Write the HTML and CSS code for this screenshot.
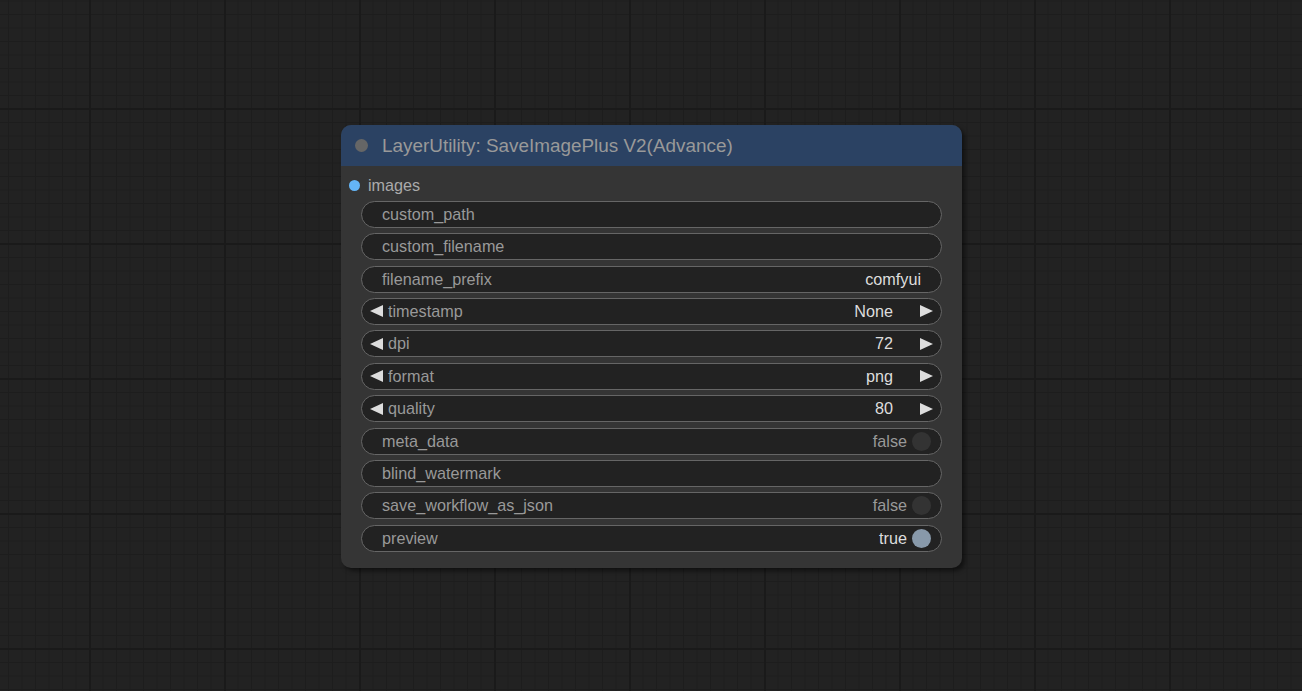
FILE: index.html
```html
<!DOCTYPE html>
<html lang="en">
<head>
    <meta charset="UTF-8">
    <meta name="viewport" content="width=device-width, initial-scale=1.0">
    <title>LayerUtility: SaveImagePlus V2(Advance)</title>
    <link rel="stylesheet" href="styles.css">
</head>
<body>
    <div class="canvas">
        <div class="node">
            <div class="node-title">
                <span class="title-dot"></span>
                <span class="title-text">LayerUtility: SaveImagePlus V2(Advance)</span>
            </div>

            <div class="node-inputs">
                <div class="slot">
                    <span class="slot-dot"></span>
                    <span class="slot-name">images</span>
                </div>
            </div>

            <div class="widgets">
                <div class="widget">
                    <span class="w-label">custom_path</span>
                </div>
                <div class="widget">
                    <span class="w-label">custom_filename</span>
                </div>
                <div class="widget">
                    <span class="w-label">filename_prefix</span>
                    <span class="w-value">comfyui</span>
                </div>
                <div class="widget combo">
                    <span class="arrow arrow-left"></span>
                    <span class="w-label">timestamp</span>
                    <span class="w-value">None</span>
                    <span class="arrow arrow-right"></span>
                </div>
                <div class="widget combo">
                    <span class="arrow arrow-left"></span>
                    <span class="w-label">dpi</span>
                    <span class="w-value">72</span>
                    <span class="arrow arrow-right"></span>
                </div>
                <div class="widget combo">
                    <span class="arrow arrow-left"></span>
                    <span class="w-label">format</span>
                    <span class="w-value">png</span>
                    <span class="arrow arrow-right"></span>
                </div>
                <div class="widget combo">
                    <span class="arrow arrow-left"></span>
                    <span class="w-label">quality</span>
                    <span class="w-value">80</span>
                    <span class="arrow arrow-right"></span>
                </div>
                <div class="widget toggle">
                    <span class="w-label">meta_data</span>
                    <span class="w-value off">false</span>
                    <span class="knob"></span>
                </div>
                <div class="widget">
                    <span class="w-label">blind_watermark</span>
                </div>
                <div class="widget toggle">
                    <span class="w-label">save_workflow_as_json</span>
                    <span class="w-value off">false</span>
                    <span class="knob"></span>
                </div>
                <div class="widget toggle">
                    <span class="w-label">preview</span>
                    <span class="w-value">true</span>
                    <span class="knob on"></span>
                </div>
            </div>
        </div>
    </div>
</body>
</html>
```

FILE: styles.css
```css
/* ComfyUI node canvas */
body {
    margin: 0;
    font-family: 'Liberation Sans', Arial, sans-serif;
    background-color: #222;
    overflow: hidden;
}

.canvas {
    position: relative;
    width: 100vw;
    height: 100vh;
    background-color: #222;
    background-image:
        linear-gradient(to right, #1a1a1a 0, #1a1a1a 1.5px, transparent 1.5px),
        linear-gradient(to bottom, #1a1a1a 0, #1a1a1a 1.5px, transparent 1.5px),
        linear-gradient(to right, #1d1d1d 0, #1d1d1d 1px, transparent 1px),
        linear-gradient(to bottom, #1d1d1d 0, #1d1d1d 1px, transparent 1px);
    background-size: 135px 135px, 135px 135px, 13.5px 13.5px, 13.5px 13.5px;
    background-position: 89px 0, 0 108px, 8px 0, 0 0.5px;
}

/* node sits on the canvas at its own coordinates */
.node {
    position: absolute;
    left: 341px;
    top: 125px;
    width: 621px;
    height: 443px;
    background-color: #353535;
    border-radius: 10px;
    box-shadow: 3px 3px 4px rgba(0, 0, 0, 0.5);
    display: flex;
    flex-direction: column;
}

.node-title {
    height: 40.5px;
    box-sizing: border-box;
    padding-top: 1px;
    flex-shrink: 0;
    display: flex;
    align-items: center;
    gap: 14px;
    padding-left: 14px;
    background-color: #2b4263;
    border-radius: 10px 10px 0 0;
}

.title-dot {
    width: 13px;
    height: 13px;
    border-radius: 50%;
    background-color: #666;
}

.title-text {
    font-size: 18.9px;
    color: #999;
    white-space: nowrap;
}

.node-inputs {
    padding: 10px 0 6px 8px;
}

.slot {
    height: 19px;
    display: flex;
    align-items: center;
    gap: 8px;
}

.slot-dot {
    width: 11px;
    height: 11px;
    border-radius: 50%;
    background-color: #64b5f6;
}

.slot-name {
    font-size: 16.2px;
    color: #aaa;
}

.widgets {
    display: flex;
    flex-direction: column;
    gap: 5.4px;
    padding: 0.3px 20px 0;
}

.widget {
    height: 27px;
    box-sizing: border-box;
    display: flex;
    align-items: center;
    padding: 0 20px;
    background-color: #222;
    border: 1px solid #666;
    border-radius: 14px;
    font-size: 16.2px;
    white-space: nowrap;
}

.w-label {
    color: #999;
    flex: 1;
}

.w-value {
    color: #ddd;
}

.w-value.off {
    color: #999;
}

.combo {
    padding: 0 8px;
}

.combo .w-label {
    margin-left: 5px;
}

.combo .w-value {
    margin-right: 27px;
}

.arrow {
    width: 0;
    height: 0;
    border-top: 6px solid transparent;
    border-bottom: 6px solid transparent;
}

.arrow-left {
    border-right: 13px solid #ddd;
}

.arrow-right {
    border-left: 13px solid #ddd;
}

.toggle {
    padding-right: 10px;
}

.knob {
    width: 19px;
    height: 19px;
    margin-left: 5px;
    border-radius: 50%;
    background-color: #333;
}

.knob.on {
    background-color: #8899aa;
}
```
